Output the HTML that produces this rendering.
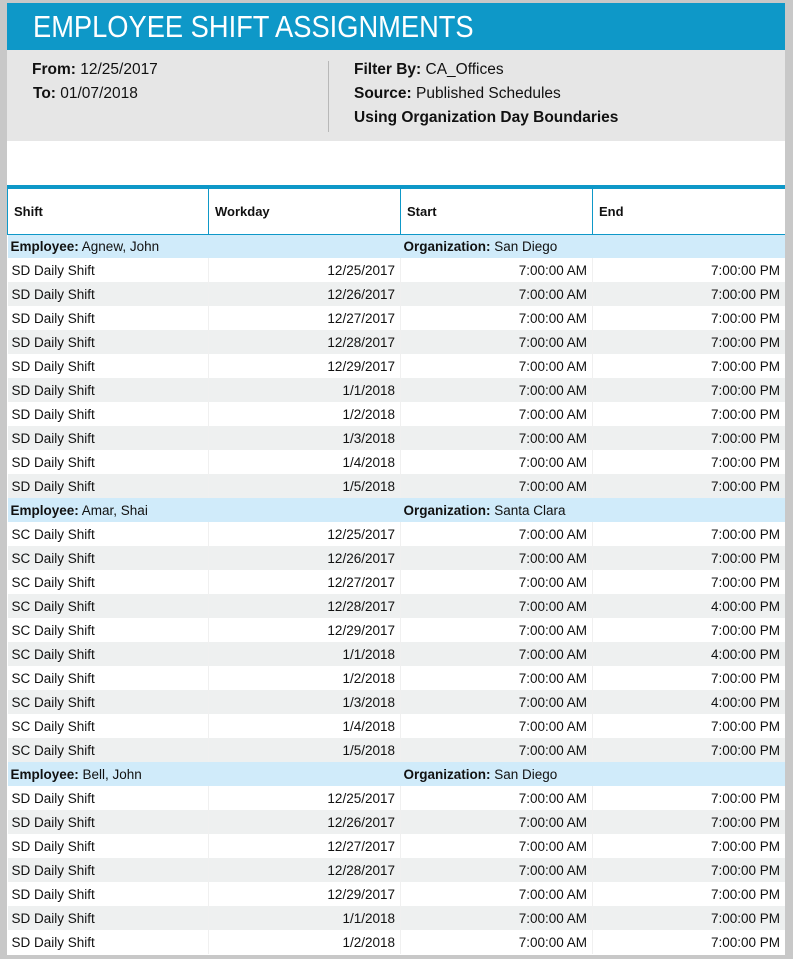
<!DOCTYPE html>
<html><head><meta charset="utf-8"><style>
*{margin:0;padding:0;box-sizing:border-box}
body{width:793px;height:959px;background:#c8c8c8;font-family:"Liberation Sans",Arial,sans-serif;color:#111;overflow:hidden;position:relative}
#page{position:absolute;left:7px;top:3px;width:778px;height:952px;background:#fff;overflow:hidden}
#title{height:47px;background:#0e98c8;color:#fff;font-size:31px;padding-left:26px;line-height:48px;white-space:nowrap}
#title span{display:inline-block;transform:scaleX(0.88);transform-origin:left center}
#info{height:91px;background:#e6e6e6;position:relative;font-size:15.5px}
#info div{position:absolute;white-space:nowrap}
#info b{font-weight:bold}
#sep{position:absolute;left:321px;top:11px;width:1px;height:71px;background:#b8b8b8}
table{position:absolute;top:182px;left:0;width:778px;border-collapse:collapse;font-size:13.5px;table-layout:fixed}
thead th{border-top:4px solid #0e98c8}
th{height:47px;border-left:1px solid #0e98c8;border-right:1px solid #0e98c8;border-bottom:1px solid #0e98c8;text-align:left;padding-left:6px;font-weight:bold;font-size:13px}
td{height:24px;padding:0 5px 0 4px;white-space:nowrap;border-right:1px solid #f0f0f0}
tr.e td{background:#d0ebfa;border:none;padding-left:3px}
tr.g td{background:#eef0f0}
td.r{text-align:right}
</style></head><body><div id="page">
<div id="title"><span>EMPLOYEE SHIFT ASSIGNMENTS</span></div>
<div id="info">
<div style="left:25px;top:11px"><b>From:</b> 12/25/2017</div>
<div style="left:26px;top:35px"><b>To:</b> 01/07/2018</div>
<div id="sep"></div>
<div style="left:347px;top:11px"><b>Filter By:</b> CA_Offices</div>
<div style="left:347px;top:35px"><b>Source:</b> Published Schedules</div>
<div style="left:347px;top:59px"><b>Using Organization Day Boundaries</b></div>
</div>
<table>
<colgroup><col style="width:201px"><col style="width:192px"><col style="width:192px"><col style="width:193px"></colgroup>
<thead><tr><th>Shift</th><th>Workday</th><th>Start</th><th>End</th></tr></thead>
<tbody id="tb">
<tr class="e"><td colspan="2"><b>Employee:</b> Agnew, John</td><td colspan="2"><b>Organization:</b> San Diego</td></tr>
<tr><td>SD Daily Shift</td><td class="r">12/25/2017</td><td class="r">7:00:00 AM</td><td class="r">7:00:00 PM</td></tr>
<tr class="g"><td>SD Daily Shift</td><td class="r">12/26/2017</td><td class="r">7:00:00 AM</td><td class="r">7:00:00 PM</td></tr>
<tr><td>SD Daily Shift</td><td class="r">12/27/2017</td><td class="r">7:00:00 AM</td><td class="r">7:00:00 PM</td></tr>
<tr class="g"><td>SD Daily Shift</td><td class="r">12/28/2017</td><td class="r">7:00:00 AM</td><td class="r">7:00:00 PM</td></tr>
<tr><td>SD Daily Shift</td><td class="r">12/29/2017</td><td class="r">7:00:00 AM</td><td class="r">7:00:00 PM</td></tr>
<tr class="g"><td>SD Daily Shift</td><td class="r">1/1/2018</td><td class="r">7:00:00 AM</td><td class="r">7:00:00 PM</td></tr>
<tr><td>SD Daily Shift</td><td class="r">1/2/2018</td><td class="r">7:00:00 AM</td><td class="r">7:00:00 PM</td></tr>
<tr class="g"><td>SD Daily Shift</td><td class="r">1/3/2018</td><td class="r">7:00:00 AM</td><td class="r">7:00:00 PM</td></tr>
<tr><td>SD Daily Shift</td><td class="r">1/4/2018</td><td class="r">7:00:00 AM</td><td class="r">7:00:00 PM</td></tr>
<tr class="g"><td>SD Daily Shift</td><td class="r">1/5/2018</td><td class="r">7:00:00 AM</td><td class="r">7:00:00 PM</td></tr>
<tr class="e"><td colspan="2"><b>Employee:</b> Amar, Shai</td><td colspan="2"><b>Organization:</b> Santa Clara</td></tr>
<tr><td>SC Daily Shift</td><td class="r">12/25/2017</td><td class="r">7:00:00 AM</td><td class="r">7:00:00 PM</td></tr>
<tr class="g"><td>SC Daily Shift</td><td class="r">12/26/2017</td><td class="r">7:00:00 AM</td><td class="r">7:00:00 PM</td></tr>
<tr><td>SC Daily Shift</td><td class="r">12/27/2017</td><td class="r">7:00:00 AM</td><td class="r">7:00:00 PM</td></tr>
<tr class="g"><td>SC Daily Shift</td><td class="r">12/28/2017</td><td class="r">7:00:00 AM</td><td class="r">4:00:00 PM</td></tr>
<tr><td>SC Daily Shift</td><td class="r">12/29/2017</td><td class="r">7:00:00 AM</td><td class="r">7:00:00 PM</td></tr>
<tr class="g"><td>SC Daily Shift</td><td class="r">1/1/2018</td><td class="r">7:00:00 AM</td><td class="r">4:00:00 PM</td></tr>
<tr><td>SC Daily Shift</td><td class="r">1/2/2018</td><td class="r">7:00:00 AM</td><td class="r">7:00:00 PM</td></tr>
<tr class="g"><td>SC Daily Shift</td><td class="r">1/3/2018</td><td class="r">7:00:00 AM</td><td class="r">4:00:00 PM</td></tr>
<tr><td>SC Daily Shift</td><td class="r">1/4/2018</td><td class="r">7:00:00 AM</td><td class="r">7:00:00 PM</td></tr>
<tr class="g"><td>SC Daily Shift</td><td class="r">1/5/2018</td><td class="r">7:00:00 AM</td><td class="r">7:00:00 PM</td></tr>
<tr class="e"><td colspan="2"><b>Employee:</b> Bell, John</td><td colspan="2"><b>Organization:</b> San Diego</td></tr>
<tr><td>SD Daily Shift</td><td class="r">12/25/2017</td><td class="r">7:00:00 AM</td><td class="r">7:00:00 PM</td></tr>
<tr class="g"><td>SD Daily Shift</td><td class="r">12/26/2017</td><td class="r">7:00:00 AM</td><td class="r">7:00:00 PM</td></tr>
<tr><td>SD Daily Shift</td><td class="r">12/27/2017</td><td class="r">7:00:00 AM</td><td class="r">7:00:00 PM</td></tr>
<tr class="g"><td>SD Daily Shift</td><td class="r">12/28/2017</td><td class="r">7:00:00 AM</td><td class="r">7:00:00 PM</td></tr>
<tr><td>SD Daily Shift</td><td class="r">12/29/2017</td><td class="r">7:00:00 AM</td><td class="r">7:00:00 PM</td></tr>
<tr class="g"><td>SD Daily Shift</td><td class="r">1/1/2018</td><td class="r">7:00:00 AM</td><td class="r">7:00:00 PM</td></tr>
<tr><td>SD Daily Shift</td><td class="r">1/2/2018</td><td class="r">7:00:00 AM</td><td class="r">7:00:00 PM</td></tr>
</tbody></table>
</div></body></html>
